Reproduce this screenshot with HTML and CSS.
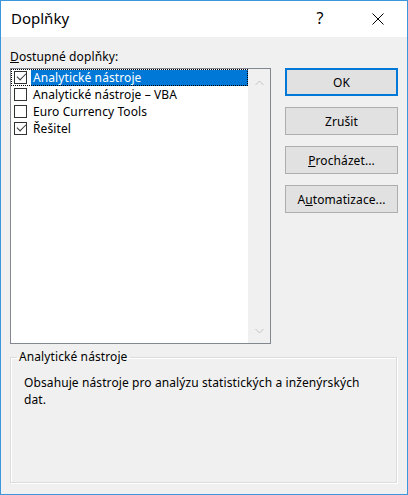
FILE: index.html
```html
<!DOCTYPE html>
<html lang="cs">
<head>
<meta charset="utf-8">
<title>Doplňky</title>
<link rel="stylesheet" href="styles.css">
</head>
<body>
<div class="dialog">
  <div class="titlebar">
    <span class="title">Doplňky</span>
    <span class="help">?</span>
    <span class="close">
      <svg width="12" height="12" viewBox="0 0 12 12"><path d="M0.5 0.5 L11.5 11.5 M11.5 0.5 L0.5 11.5" stroke="#000" stroke-width="1" fill="none"/></svg>
    </span>
  </div>
  <div class="content">
    <div class="main">
      <div class="left">
        <div class="label"><u>D</u>ostupné doplňky:</div>
        <div class="listbox">
          <ul class="items">
            <li class="item selected focused">
              <span class="check checked"></span><span class="text">Analytické nástroje</span>
            </li>
            <li class="item">
              <span class="check"></span><span class="text">Analytické nástroje – VBA</span>
            </li>
            <li class="item">
              <span class="check"></span><span class="text">Euro Currency Tools</span>
            </li>
            <li class="item">
              <span class="check checked"></span><span class="text">Řešitel</span>
            </li>
          </ul>
          <div class="scrollbar">
            <svg class="arrow" width="9" height="6" viewBox="0 0 9 6"><path d="M0.5 5 L4.5 1 L8.5 5" stroke="#c2c2c2" fill="none"/></svg>
            <svg class="arrow" width="9" height="6" viewBox="0 0 9 6"><path d="M0.5 1 L4.5 5 L8.5 1" stroke="#c2c2c2" fill="none"/></svg>
          </div>
        </div>
      </div>
      <div class="buttons">
        <button class="btn default">OK</button>
        <button class="btn">Zrušit</button>
        <button class="btn"><u>P</u>rocházet...</button>
        <button class="btn">A<u>u</u>tomatizace...</button>
      </div>
    </div>
    <fieldset class="group">
      <legend>Analytické nástroje</legend>
      <p class="desc">Obsahuje nástroje pro analýzu statistických a inženýrských dat.</p>
    </fieldset>
  </div>
</div>
</body>
</html>
```
FILE: styles.css
```css
html, body {
  margin: 0;
  padding: 0;
  background: #f0f0f0;
}

body {
  font-family: "Noto Sans", "DejaVu Sans", sans-serif;
  font-size: 12px;
  letter-spacing: 0.1px;
  color: #000;
}

.dialog {
  width: 408px;
  height: 495px;
  box-sizing: border-box;
  border: 1px solid #3c96dc;
  display: flex;
  flex-direction: column;
}

.titlebar {
  height: 36px;
  flex: none;
  background: #fff;
  display: flex;
  align-items: center;
}

.title {
  font-size: 15px;
  letter-spacing: 0;
  margin-left: 10px;
  flex: 1;
  padding-bottom: 2px;
}

.help {
  font-size: 16px;
  width: 20px;
  text-align: center;
  margin-right: 42px;
  padding-bottom: 2px;
}

.close {
  width: 12px;
  height: 12px;
  margin-right: 23px;
  display: flex;
}

.content {
  flex: 1;
  background: #f0f0f0;
  padding: 12px 9px 11px 9px;
  display: flex;
  flex-direction: column;
}

.main {
  display: flex;
}

.left {
  width: 261px;
}

.label {
  line-height: 16px;
  height: 16px;
  margin-bottom: 3px;
}

.listbox {
  height: 276px;
  box-sizing: border-box;
  border: 1px solid #828790;
  background: #fff;
  display: flex;
}

.items {
  list-style: none;
  margin: 0;
  padding: 0;
  flex: 1;
}

.item {
  height: 17px;
  display: flex;
  align-items: center;
  box-sizing: border-box;
  padding-left: 3px;
}

.item.focused {
  outline: 1px dotted #000;
  outline-offset: -1px;
}

.check {
  width: 13px;
  height: 13px;
  box-sizing: border-box;
  border: 1px solid #333;
  background: #fff;
  margin-right: 4px;
  position: relative;
  flex: none;
}

.check.checked::after {
  content: "";
  position: absolute;
  left: 2px;
  top: 1px;
  width: 8px;
  height: 4px;
  border-left: 1px solid #333;
  border-bottom: 1px solid #333;
  transform: rotate(-45deg);
  transform-origin: center;
}

.text {
  line-height: 16px;
  padding: 0 2px;
  flex: 1;
  height: 16px;
}

.item.selected .text {
  background: #0078d7;
  color: #fff;
}

.scrollbar {
  width: 22px;
  background: #f0f0f0;
  display: flex;
  flex-direction: column;
  justify-content: space-between;
  align-items: center;
  padding: 11px 0 9px;
}

.buttons {
  margin-left: 14px;
  padding-top: 19px;
  display: flex;
  flex-direction: column;
  gap: 11px;
}

.btn {
  width: 113px;
  height: 28px;
  box-sizing: border-box;
  border: 1px solid #adadad;
  background: #e1e1e1;
  font-family: inherit;
  font-size: 12px;
  letter-spacing: 0.1px;
  color: #000;
  padding: 0;
  margin: 0;
}

.btn.default {
  border: 2px solid #0078d7;
}

.group {
  margin: 5px 1px 0 0;
  padding: 0;
  border: 1px solid #dcdcdc;
  box-shadow: inset 1px 1px 0 #fff, 1px 1px 0 #fff;
  flex: 1;
  min-width: 0;
}

.group legend {
  padding: 0 2px;
  margin-left: 6px;
  line-height: 16px;
}

.desc {
  margin: 9px 0 0;
  padding: 0 13px;
  line-height: 17px;
}
```
